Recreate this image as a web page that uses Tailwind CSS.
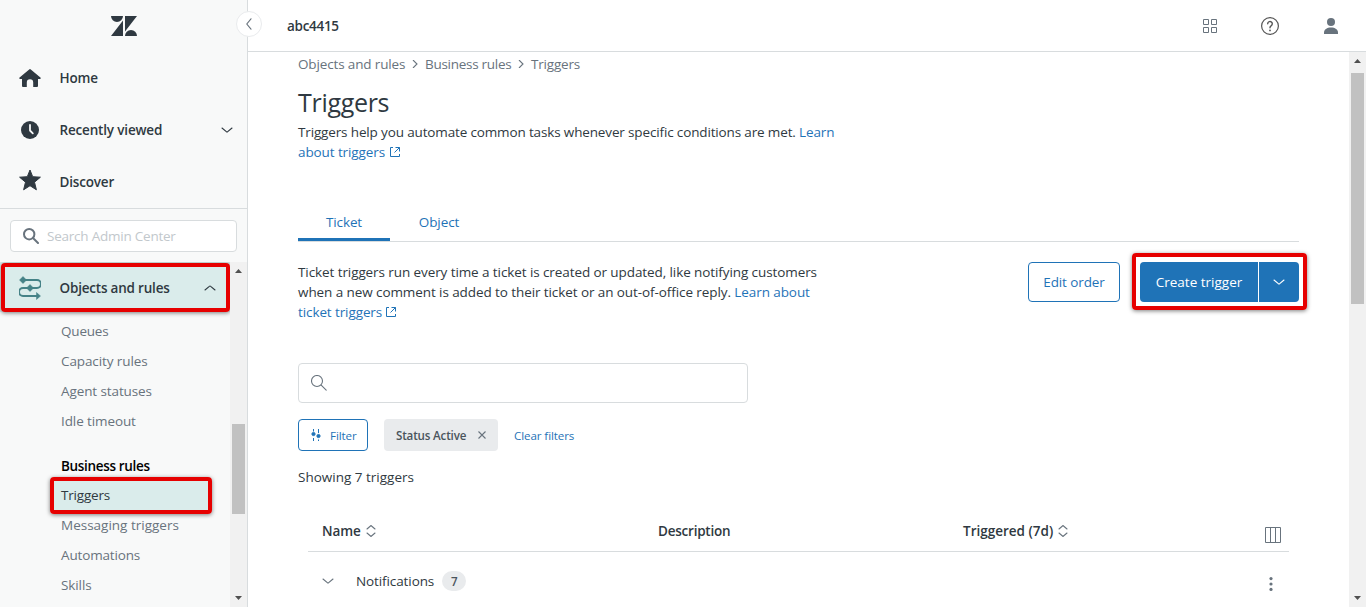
<!DOCTYPE html>
<html lang="en">

<head>
    <meta charset="UTF-8">
    <meta name="viewport" content="width=device-width, initial-scale=1.0">
    <title>Triggers</title>
    <script src="https://cdn.jsdelivr.net/npm/@tailwindcss/browser@4"></script>
</head>

<body class="flex h-screen overflow-hidden bg-white font-['Open_Sans',sans-serif] text-[13.5px] leading-5 tracking-[-0.1px] text-[#2f3941]">
    <!-- Sidebar -->
    <aside class="relative flex w-[248px] shrink-0 flex-col border-r border-[#d8dcde] bg-[#f8f9f9]">
        <div class="flex h-[52px] items-center justify-center">
            <svg class="h-5 w-[26px]" viewBox="0 0 26 20" fill="#2f3941">
                <path d="M0 0h12a6 6 0 0 1-12 0zM12 4.5V20H0zM14 0h12L14 15.5zM14 20a6 6 0 0 1 12 0z" />
            </svg>
        </div>
        <button class="absolute top-[11px] left-[236px] z-10 flex size-[26px] items-center justify-center rounded-full border border-[#e9ebed] bg-white">
            <svg class="size-3" viewBox="0 0 12 12" fill="none" stroke="#68737d" stroke-width="1.1" stroke-linecap="round">
                <path d="M8 .8 3.8 6 8 11.2" />
            </svg>
        </button>

        <!-- Main navigation -->
        <nav class="border-b border-[#d8dcde] font-semibold tracking-[-0.17px]">
            <a class="flex h-[52px] items-center pl-[19px]">
                <svg class="size-[22px]" viewBox="0 0 22 22" fill="#2f3941">
                    <path d="M10.2 2.4a1.2 1.2 0 0 1 1.6 0l9.6 8.2c.7.6.3 1.5-.5 1.5H19V19a1 1 0 0 1-1 1h-3.800v-4.500a3.200 3.200 0 0 0-6.400 0V20H4a1 1 0 0 1-1-1v-6.900H1.100c-.8 0-1.200-.9-.5-1.500z" />
                </svg>
                <span class="ml-[18.5px]">Home</span>
            </a>
            <a class="flex h-[52px] items-center pr-[14px] pl-[19px]">
                <svg class="size-[22px]" viewBox="0 0 22 22">
                    <circle cx="11" cy="11" r="9" fill="#2f3941" />
                    <path d="M11 6v5.500l2.800 2.800" fill="none" stroke="#f8f9f9" stroke-width="1.800" stroke-linecap="round" stroke-linejoin="round" />
                </svg>
                <span class="ml-[18.5px] flex-1">Recently viewed</span>
                <svg class="h-3 w-3" viewBox="0 0 12 12" fill="none" stroke="#2f3941" stroke-width="1.100" stroke-linecap="round">
                    <path d="M1 4l4.300 3.700a1 1 0 0 0 1.400 0L11 4" />
                </svg>
            </a>
            <a class="flex h-[52px] items-center pl-[19px]">
                <svg class="mb-1 size-[22px]" viewBox="0 0 22 22" fill="#2f3941" stroke="#2f3941" stroke-width="1" stroke-linejoin="round">
                    <path d="M11 1l2.700 6.700 7.700.5-5.900 5 1.900 7.600L11 16.700l-6.400 4.100 1.900-7.600-5.900-5 7.700-.5z" />
                </svg>
                <span class="ml-[18.5px]">Discover</span>
            </a>
        </nav>

        <div class="px-2.5 pt-[11px] pb-2.5">
            <div class="flex h-8 items-center rounded border border-[#d8dcde] bg-white pl-3 text-[#c2c8cc]">
                <svg class="size-4" viewBox="0 0 16 16" fill="none" stroke="#68737d" stroke-width="2" stroke-linecap="round">
                    <circle cx="6.200" cy="6.200" r="5.200" />
                    <path d="M10 10l5 5" />
                </svg>
                <span class="ml-2 tracking-[-0.23px]">Search Admin Center</span>
            </div>
        </div>

        <div class="flex min-h-0 flex-1">
            <div class="relative flex-1 overflow-hidden">
                <div class="flex h-[50px] items-center bg-[#daeceb] pt-0.5 pr-[14px] pl-[19px] font-semibold">
                    <svg class="h-6 w-[22px]" viewBox="0 0 22 24" fill="none" stroke="#458287" stroke-width="2">
                        <path d="M4 4h14a3.700 3.700 0 0 1 0 8H4a4 4 0 0 0 0 8h14" />
                        <path d="M4 .5 7.500 4 4 7.500.5 4zM11 8.500l3.500 3.500-3.500 3.500L7.500 12zM17.500 16.500 21.500 20l-4 3.500z" fill="#458287" stroke-width=".5" />
                    </svg>
                    <span class="ml-[18.5px] flex-1 tracking-[-0.2px]">Objects and rules</span>
                    <svg class="h-3 w-3" viewBox="0 0 12 12" fill="none" stroke="#2f3941" stroke-width="1.100" stroke-linecap="round">
                        <path d="M1 8l4.300-3.700a1 1 0 0 1 1.400 0L11 8" />
                    </svg>
                </div>
                <ul class="pt-1 text-[#68737d]">
                    <li class="flex h-[30px] items-center pl-[61px]"><span class="tracking-[-0.2px]">Queues</span></li>
                    <li class="flex h-[30px] items-center pl-[61px]"><span>Capacity rules</span></li>
                    <li class="flex h-[30px] items-center pl-[61px]"><span>Agent statuses</span></li>
                    <li class="flex h-[30px] items-center pl-[61px]"><span>Idle timeout</span></li>
                    <li class="mt-[15px] flex h-[29px] items-center pl-[61px] font-semibold text-black"><span class="tracking-[-0.33px]">Business rules</span></li>
                    <li class="mr-[19px] ml-[51px] flex h-[30px] items-center bg-[#daeceb] pl-2.5 text-[#2f3941]"><span class="tracking-[-0.2px]">Triggers</span></li>
                    <li class="flex h-[30px] items-center pl-[61px]"><span class="tracking-normal">Messaging triggers</span></li>
                    <li class="flex h-[30px] items-center pl-[61px]"><span class="tracking-[-0.15px]">Automations</span></li>
                    <li class="flex h-[30px] items-center pl-[61px]"><span>Skills</span></li>
                </ul>
                <!-- Highlights -->
                <div class="absolute top-[1px] left-[1px] h-[49px] w-[229px] rounded-sm border-4 border-[#e60000] shadow-[0_1px_4px_rgba(0,0,0,0.5)]"></div>
                <div class="absolute top-[215px] left-[50px] h-[37px] w-[162px] rounded-sm border-4 border-[#e60000] shadow-[0_1px_4px_rgba(0,0,0,0.5)]"></div>
            </div>
            <!-- Sidebar scrollbar -->
            <div class="flex w-[17px] flex-col items-center bg-[#f1f1f1]">
                <svg class="mt-[7px] h-1 w-[7px]" viewBox="0 0 7 4" fill="#505050"><path d="M0 4l3.500-4L7 4z" /></svg>
                <div class="mt-[151px] h-[90px] w-[13px] bg-[#c1c1c1]"></div>
                <svg class="mt-auto mb-[7px] h-1 w-[7px]" viewBox="0 0 7 4" fill="#505050"><path d="M0 0h7L3.500 4z" /></svg>
            </div>
        </div>
    </aside>

    <div class="flex min-w-0 flex-1 flex-col">
        <!-- Top bar -->
        <header class="flex h-[52px] shrink-0 items-center border-b border-[#d8dcde] pr-[27px] pl-[39px]">
            <span class="flex-1 pt-px font-semibold tracking-[-0.3px]">abc4415</span>
            <svg class="mr-[43px] size-4" viewBox="0 0 16 16" fill="none" stroke="#68737d">
                <path d="M1.500 1.500h5v5h-5zM9.500 1.500h5v5h-5zM1.500 9.500h5v5h-5zM9.500 9.500h5v5h-5z" />
            </svg>
            <svg class="mr-[44px] size-[18px]" viewBox="0 0 18 18" fill="none" stroke="#555" stroke-width="1.200">
                <circle cx="9" cy="9" r="8.400" />
                <path d="M6.700 6.700a2.300 2.300 0 1 1 3.400 2.100c-.8.5-1.100.9-1.100 2" stroke-width="1.400" stroke-linecap="round" />
                <circle cx="9" cy="13.400" r=".9" fill="#555" stroke="none" />
            </svg>
            <svg class="h-4 w-[16px]" viewBox="0 0 16 16" fill="#68737d">
                <circle cx="8" cy="4" r="4" />
                <path d="M1 16v-1.500C1 11.500 4 9.500 8 9.500s7 2 7 5V16z" />
            </svg>
        </header>

        <div class="flex min-h-0 flex-1">
            <main class="flex-1 overflow-hidden pr-[50px] pl-[50px]">
                <!-- Breadcrumb -->
                <div class="mt-0.5 flex h-5 items-center text-[#68737d]">
                    <span class="w-[107px] tracking-[-0.14px] whitespace-nowrap">Objects and rules</span>
                    <svg class="mr-1.5 ml-1.5 size-2" viewBox="0 0 8 8" fill="none" stroke="#68737d" stroke-width="1.100"><path d="M2 0l4 4-4 4" /></svg>
                    <span class="w-[86px] tracking-[-0.28px] whitespace-nowrap">Business rules</span>
                    <svg class="mr-1.5 ml-1.5 size-2" viewBox="0 0 8 8" fill="none" stroke="#68737d" stroke-width="1.100"><path d="M2 0l4 4-4 4" /></svg>
                    <span class="tracking-[-0.2px]">Triggers</span>
                </div>
                <h1 class="mt-3 text-[25px] leading-8 tracking-[-0.3px]">Triggers</h1>
                <p class="mt-1">
                    <span class="tracking-[-0.145px]">Triggers help you automate common tasks whenever specific conditions are met. <a class="text-[#1f73b7]">Learn</a></span><br>
                    <a class="flex items-center text-[#1f73b7]"><span>about triggers</span>
                        <svg class="ml-1 size-3" viewBox="0 0 12 12" fill="none" stroke="#1f73b7"><path d="M4 1.500H1.500v9h9V8M6.500 1.500h4v4M10.500 1.500l-5 5" /></svg>
                    </a>
                </p>

                <!-- Tabs -->
                <div class="mt-[42px] flex h-[38px] border-b border-[#d8dcde] text-[#1f73b7]">
                    <div class="h-[37px] w-[92px] border-b-3 border-[#1f73b7] pt-2 text-center"><span>Ticket</span></div>
                    <div class="w-[98px] pt-2 text-center"><span>Object</span></div>
                </div>

                <div class="mt-5 flex items-start">
                    <p class="flex-1">
                        <span class="tracking-[-0.09px]">Ticket triggers run every time a ticket is created or updated, like notifying customers</span><br>
                        <span class="tracking-[-0.085px]">when a new comment is added to their ticket or an out-of-office reply. <a class="text-[#1f73b7]">Learn about</a></span><br>
                        <a class="flex items-center text-[#1f73b7]"><span>ticket triggers</span>
                            <svg class="ml-[3px] size-3" viewBox="0 0 12 12" fill="none" stroke="#1f73b7"><path d="M4 1.500H1.500v9h9V8M6.500 1.500h4v4M10.500 1.500l-5 5" /></svg>
                        </a>
                    </p>
                    <button class="h-10 w-[92px] rounded border border-[#1f73b7] text-[#1f73b7]"><span>Edit order</span></button>
                    <div class="relative ml-5 flex h-10 gap-px text-white">
                        <button class="w-[118px] rounded-l bg-[#1f73b7]"><span class="tracking-normal">Create trigger</span></button>
                        <button class="flex w-10 items-center justify-center rounded-r bg-[#1f73b7]">
                            <svg class="size-3" viewBox="0 0 12 12" fill="none" stroke="#fff" stroke-width="1.100" stroke-linecap="round"><path d="M1 4l4.300 3.700a1 1 0 0 0 1.400 0L11 4" /></svg>
                        </button>
                        <!-- Highlight -->
                        <div class="absolute -top-[9px] -left-2 h-[57px] w-[175px] rounded-sm border-4 border-[#e60000] shadow-[0_1px_4px_rgba(0,0,0,0.5)]"></div>
                    </div>
                </div>

                <!-- Search and filters -->
                <div class="mt-[41px] flex h-10 w-[450px] items-center rounded border border-[#d8dcde] pl-3">
                    <svg class="size-4" viewBox="0 0 16 16" fill="none" stroke="#68737d" stroke-width="1.100" stroke-linecap="round">
                        <circle cx="6" cy="6" r="5.500" />
                        <path d="M10.200 10.200l5 5" />
                    </svg>
                </div>
                <div class="mt-4 flex h-8 items-center text-[11.600px]">
                    <button class="flex h-8 w-[70px] items-center rounded border border-[#1f73b7] pl-3 text-[#1f73b7]">
                        <svg class="h-3 w-2.5" viewBox="0 0 10 12" fill="#1f73b7" stroke="#1f73b7">
                            <path d="M2.500 0v2.500M2.500 9v3M7.500 0v4M7.500 10.500V12" />
                            <circle cx="2.500" cy="5" r="1.600" />
                            <circle cx="7.500" cy="7" r="1.600" />
                        </svg>
                        <span class="ml-[9px] pt-0.5">Filter</span>
                    </button>
                    <div class="ml-4 flex h-8 w-[114px] items-center rounded bg-[#e9ebed] pl-3 font-semibold text-[#49545c]">
                        <span class="pt-0.5 tracking-[-0.17px]">Status Active</span>
                        <svg class="ml-auto mr-3 size-2" viewBox="0 0 8 8" fill="none" stroke="#68737d" stroke-width="1.100"><path d="M.5.500l7 7M7.500.500l-7 7" /></svg>
                    </div>
                    <a class="ml-4 pt-0.5 text-[#1f73b7]"><span>Clear filters</span></a>
                </div>
                <p class="mt-4"><span class="tracking-normal">Showing 7 triggers</span></p>

                <!-- Table -->
                <div class="mr-2.5 ml-2.5">
                    <div class="mt-6 flex h-[41px] items-center border-b border-[#d8dcde] pl-[14px] font-semibold">
                        <div class="flex w-[336px] items-center"><span>Name</span>
                            <svg class="ml-[5px] h-3 w-[10px]" viewBox="0 0 10 12" fill="none" stroke="#68737d" stroke-width="1.100" stroke-linecap="round"><path d="M1 4l4-3.500L9 4M1 8l4 3.500L9 8" /></svg>
                        </div>
                        <div class="w-[305px]"><span class="tracking-[-0.23px]">Description</span></div>
                        <div class="flex flex-1 items-center"><span class="tracking-normal">Triggered (7d)</span>
                            <svg class="ml-[5px] h-3 w-[10px]" viewBox="0 0 10 12" fill="none" stroke="#68737d" stroke-width="1.100" stroke-linecap="round"><path d="M1 4l4-3.500L9 4M1 8l4 3.500L9 8" /></svg>
                        </div>
                        <svg class="mt-[7px] mr-2 size-4" viewBox="0 0 16 16" fill="none" stroke="#68737d"><path d="M.5.500h15v15H.5zM5.500.500v15M10.500.500v15" /></svg>
                    </div>
                    <div class="flex h-[58px] items-center pl-[14px]">
                        <svg class="size-3" viewBox="0 0 12 12" fill="none" stroke="#68737d" stroke-width="1.100" stroke-linecap="round"><path d="M1 4l4.300 3.700a1 1 0 0 0 1.400 0L11 4" /></svg>
                        <span class="ml-[22px]">Notifications</span>
                        <span class="ml-2 flex h-5 w-6 items-center justify-center rounded-full bg-[#e9ebed] pt-px text-[11.600px] font-semibold text-[#49545c]">7</span>
                        <svg class="mt-1.5 mr-4 ml-auto h-[14px] w-1" viewBox="0 0 4 14" fill="#68737d">
                            <circle cx="2" cy="1.600" r="1.600" />
                            <circle cx="2" cy="7" r="1.600" />
                            <circle cx="2" cy="12.400" r="1.600" />
                        </svg>
                    </div>
                </div>
            </main>
            <!-- Page scrollbar -->
            <div class="flex w-[17px] flex-col items-center bg-[#f1f1f1]">
                <svg class="mt-[7px] h-1 w-[7px]" viewBox="0 0 7 4" fill="#505050"><path d="M0 4l3.500-4L7 4z" /></svg>
                <div class="mt-2.5 h-[231px] w-[13px] bg-[#c1c1c1]"></div>
                <svg class="mt-auto mb-[7px] h-1 w-[7px]" viewBox="0 0 7 4" fill="#505050"><path d="M0 0h7L3.500 4z" /></svg>
            </div>
        </div>
    </div>
</body>

</html>
